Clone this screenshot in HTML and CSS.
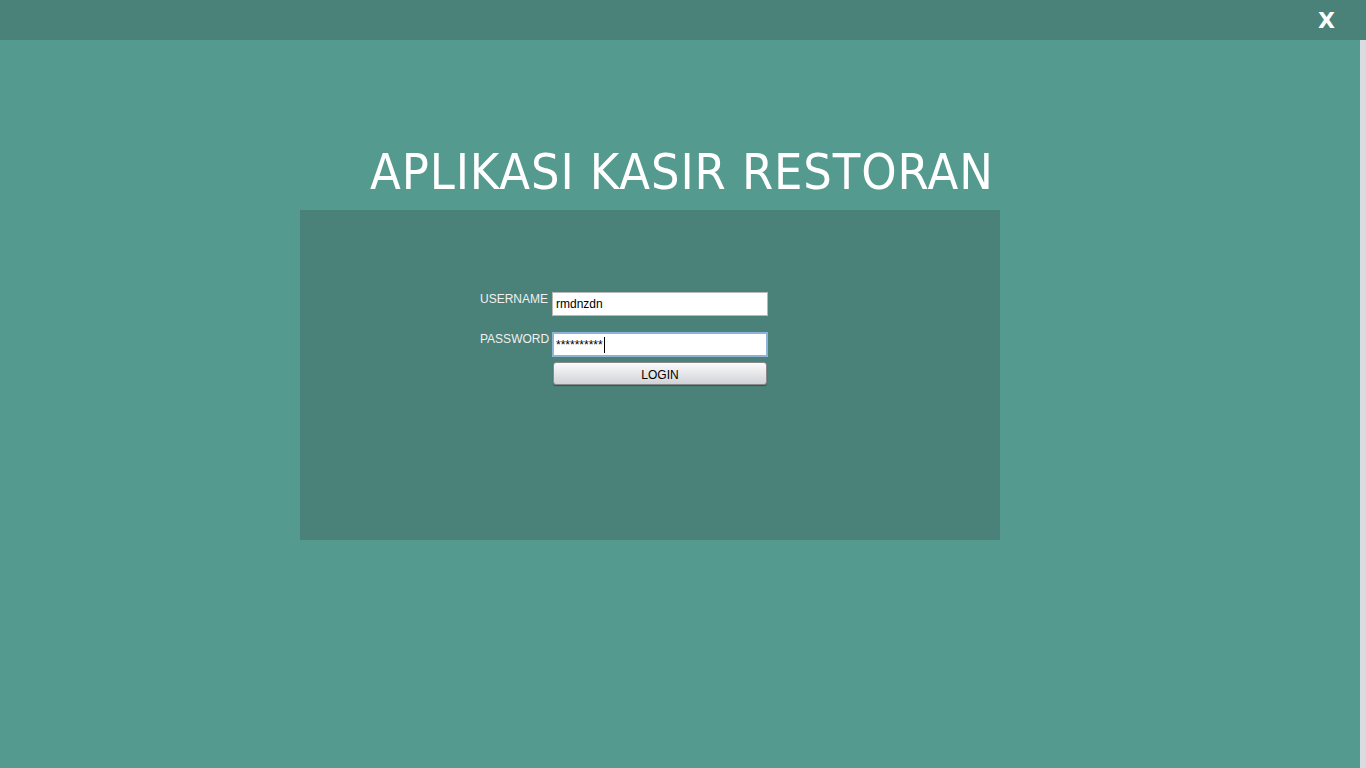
FILE: index.html
```html
<!DOCTYPE html>
<html>
<head>
<meta charset="utf-8">
<link rel="stylesheet" href="styles.css">
</head>
<body>
<div class="topbar"><span class="close">X</span></div>
<div class="content">
  <div class="main">
    <h1 class="title">APLIKASI KASIR RESTORAN</h1>
    <div class="panel">
      <form class="form">
        <div class="row">
          <label class="label">USERNAME</label>
          <input class="field" type="text" value="rmdnzdn">
        </div>
        <div class="row">
          <label class="label">PASSWORD</label>
          <div class="field focused"><span>**********</span><span class="caret"></span></div>
        </div>
        <div class="row">
          <span class="label"></span>
          <button type="button" class="btn">LOGIN</button>
        </div>
      </form>
    </div>
  </div>
  <div class="strip"></div>
</div>
</body>
</html>
```
FILE: styles.css
```css
html, body { margin: 0; padding: 0; height: 100%; overflow: hidden; }
body { background: #559a8e; font-family: "Liberation Sans", Arial, sans-serif; }
.topbar { height: 40px; background: #4a8279; display: flex; justify-content: flex-end; align-items: center; }
.close { color: #fff; font-family: "DejaVu Sans", sans-serif; font-weight: bold; font-size: 22px; margin-right: 31px; margin-top: 1px; }
.content { display: flex; height: 728px; }
.main { flex: 1; }
.strip { width: 6px; background: #d8dbe0; }
.title { margin: 0; padding: 99px 0 0 370px; height: 71px; font-family: "DejaVu Sans Condensed", "DejaVu Sans", sans-serif; font-weight: normal; font-size: 50px; line-height: 66px; color: #fff; letter-spacing: 0.9px; }
.panel { margin-left: 300px; width: 700px; height: 330px; background: #4a8279; }
.form { padding: 82px 0 0 180px; display: flex; flex-direction: column; }
.row { display: flex; align-items: flex-start; }
.label { width: 72px; color: #f0f0f0; font-size: 12px; line-height: 14px; padding-top: 0px; }
.field { box-sizing: border-box; width: 216px; height: 24px; margin: 0; border: 1px solid #b8b8b8; background: #fff; font-family: "Liberation Sans", Arial, sans-serif; font-size: 12px; padding: 0 3px; color: #000; outline: none; }
.row + .row { margin-top: 16px; }
.row:last-child { margin-top: 5px; }
.focused { height: 25px; border: 2px solid #8fb2d8; display: flex; align-items: center; padding-left: 2px; font-size: 12px; }
.caret { display: inline-block; width: 1px; height: 16px; background: #000; margin-left: 1px; }
.btn { box-sizing: border-box; margin-left: 1px; width: 214px; height: 23px; border: 1px solid #8a8a8a; border-radius: 3px; background: linear-gradient(#fbfbfc, #e6e7ea 50%, #d0d2d7); font-family: "Liberation Sans", Arial, sans-serif; font-size: 12px; color: #000; padding: 2px 0 0; box-shadow: 0 1px 1px rgba(0,0,0,0.35); }
```
